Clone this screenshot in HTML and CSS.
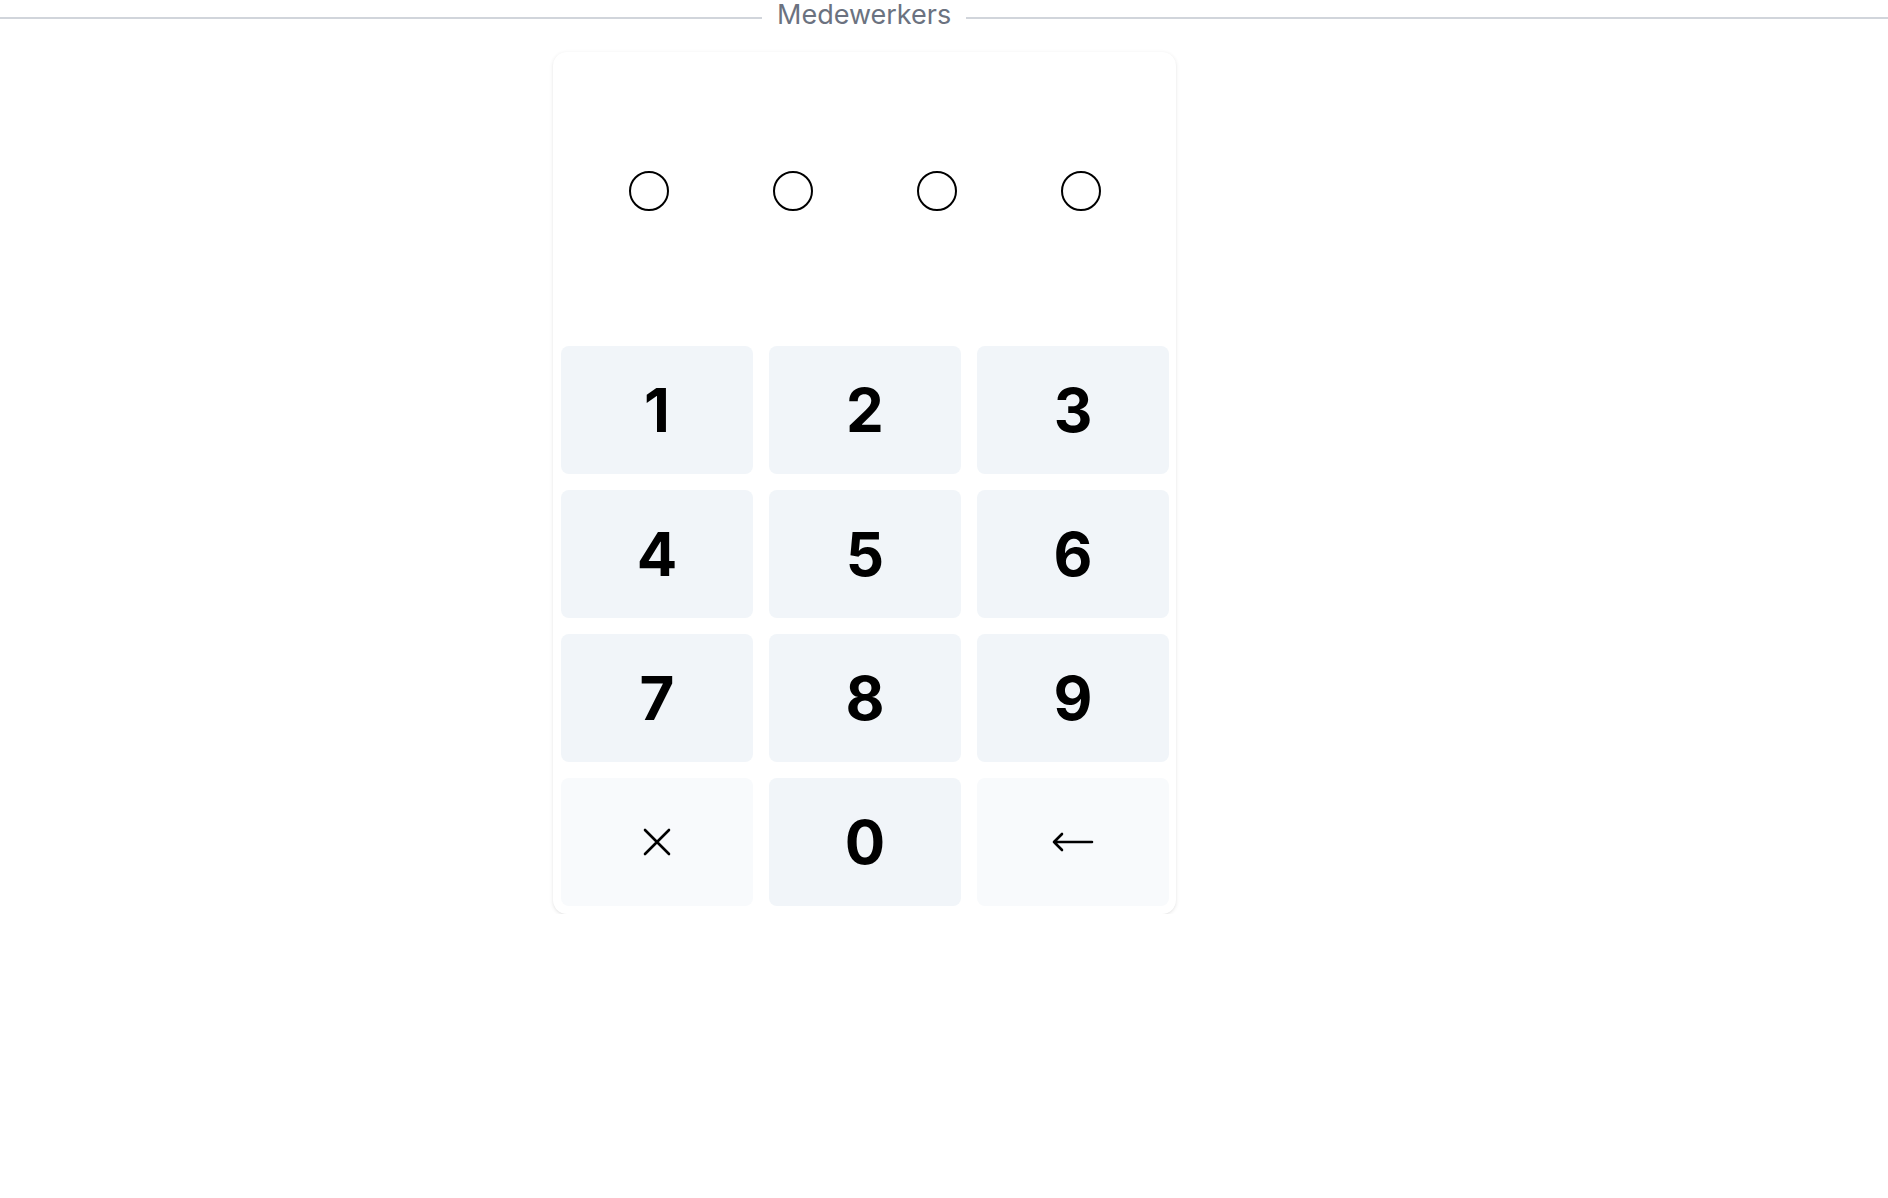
FILE: index.html
```html
<!DOCTYPE html>
<html lang="nl">
<head>
<meta charset="UTF-8" />
<title>Medewerkers</title>
<link rel="stylesheet" href="styles.css">
</head>
<body>

<!-- Titel -->
<div class="section-title">
  <span class="line"></span>
  <span class="label">Medewerkers</span>
  <span class="line"></span>
</div>

<div class="page">
  <!-- Pincode -->
  <div class="pin-card">
    <div class="pin-dots">
      <span class="dot"></span>
      <span class="dot"></span>
      <span class="dot"></span>
      <span class="dot"></span>
    </div>
    <div class="keypad">
      <button class="key">1</button>
      <button class="key">2</button>
      <button class="key">3</button>
      <button class="key">4</button>
      <button class="key">5</button>
      <button class="key">6</button>
      <button class="key">7</button>
      <button class="key">8</button>
      <button class="key">9</button>
      <button class="key key-light" aria-label="Wissen">
        <svg width="30" height="30" viewBox="0 0 30 30" fill="none" stroke="#000" stroke-width="2.6" stroke-linecap="round">
          <path d="M3 3 L27 27 M27 3 L3 27" />
        </svg>
      </button>
      <button class="key">0</button>
      <button class="key key-light" aria-label="Terug">
        <svg width="42" height="22" viewBox="0 0 42 22" fill="none" stroke="#000" stroke-width="2.6" stroke-linecap="round" stroke-linejoin="round">
          <path d="M2 11 H40 M10 3 L2 11 L10 19" />
        </svg>
      </button>
    </div>
  </div>
</div>

</body>
</html>
```

FILE: styles.css
```css
body {
  margin: 0;
  background: #fff;
  font-family: Inter, "Noto Sans", sans-serif;
  color: #000;
}

/* Titel */
.section-title {
  display: grid;
  grid-template-columns: 762px auto 1fr;
  align-items: center;
  height: 30px;
  margin-top: 3px;
}
.section-title .line {
  height: 2px;
  background: #d1d5db;
}
.section-title .label {
  padding: 0 15px;
  font-size: 27px;
  color: #6b7280;
  line-height: 30px;
  margin-top: -7px;
}

/* Pagina */
.page {
  width: 1729px;
}

.pin-card {
  width: 623px;
  box-sizing: border-box;
  margin: 19px auto 0 auto;
  padding: 8px;
  background: #fff;
  border-radius: 14px;
  box-shadow: 0 1px 4px rgba(0,0,0,0.09), 0 1px 2px rgba(0,0,0,0.04);
}

.pin-dots {
  display: flex;
  justify-content: center;
  gap: 104px;
  height: 286px;
  padding-top: 111px;
  box-sizing: border-box;
}
.dot {
  width: 40px;
  height: 40px;
  box-sizing: border-box;
  border: 2.5px solid #000;
  border-radius: 50%;
}

/* Toetsen */
.keypad {
  display: grid;
  grid-template-columns: repeat(3, 192px);
  grid-auto-rows: 128px;
  gap: 16px;
}
.key {
  display: flex;
  align-items: center;
  justify-content: center;
  border: none;
  border-radius: 8px;
  background: #f1f5f9;
  font-family: Inter, "Noto Sans", sans-serif;
  font-size: 60px;
  font-weight: 700;
  color: #000;
  cursor: pointer;
  padding: 0;
}
.key:hover {
  background: #e2e8f0;
}
.key-light {
  background: #f8fafc;
}
```
